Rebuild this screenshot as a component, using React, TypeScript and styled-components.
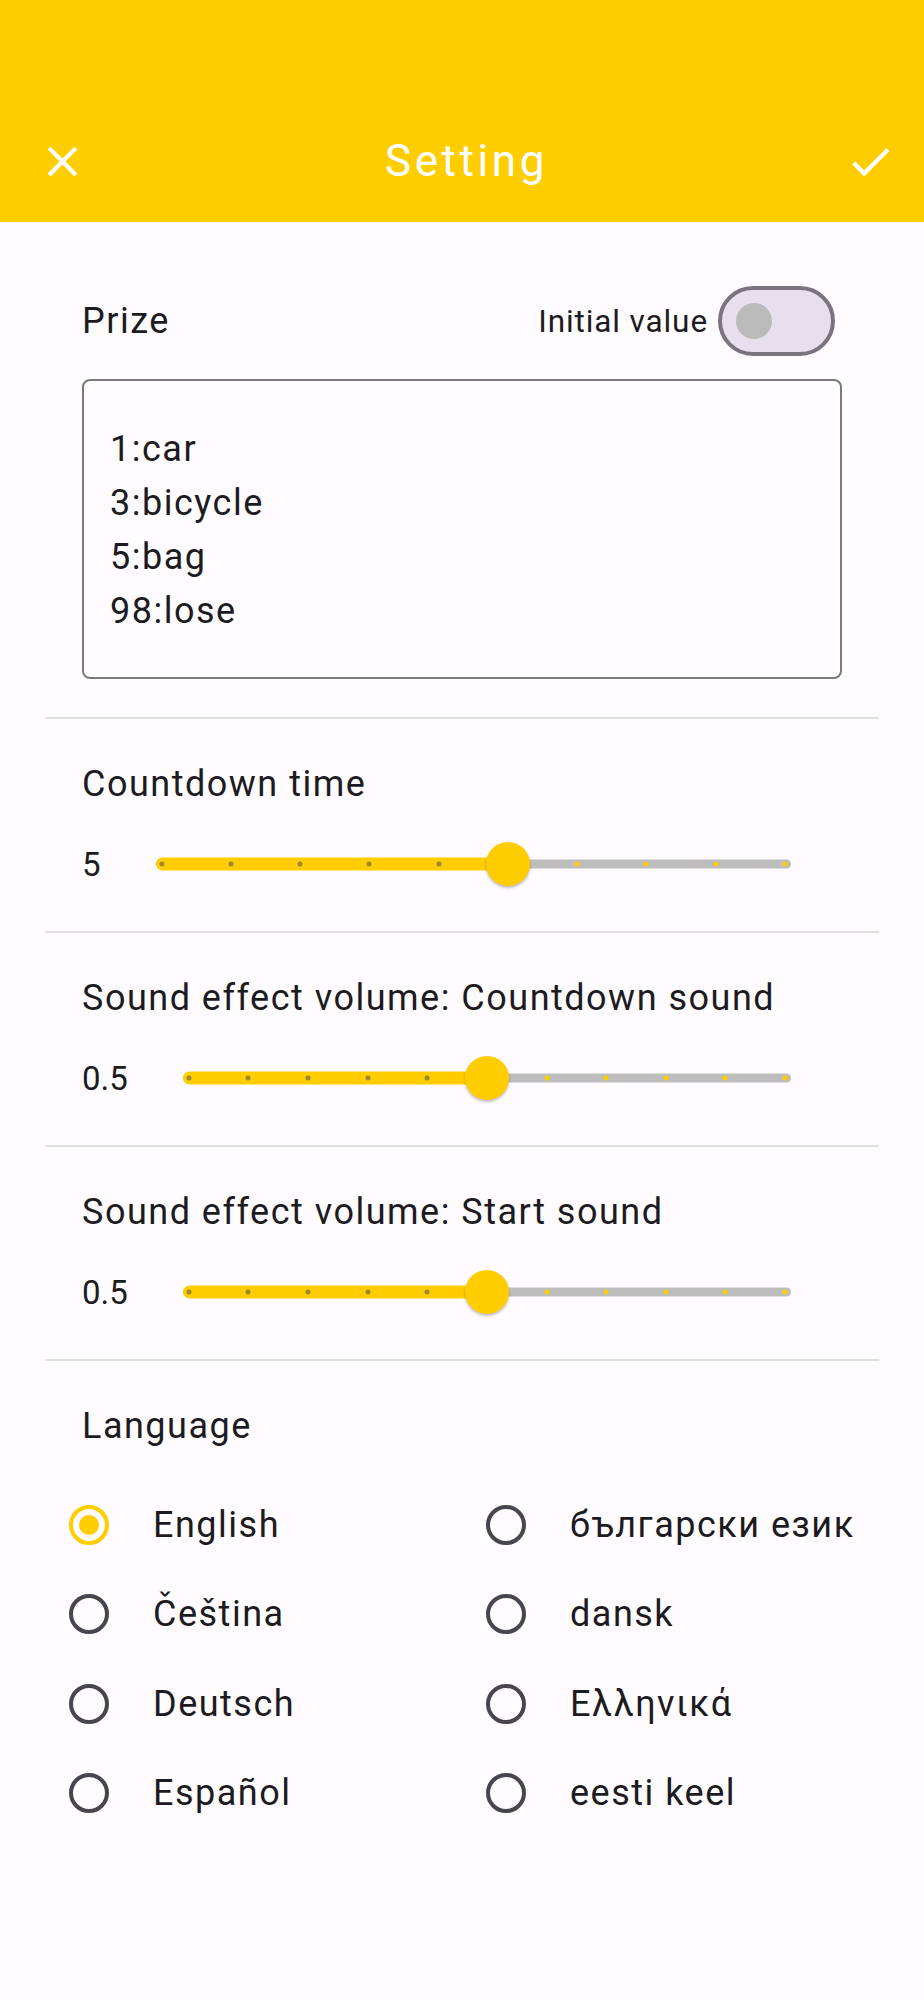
import React, { useState } from "react";
import styled, { createGlobalStyle } from "styled-components";

const YELLOW = "#FFCD00";
const TEXT = "#1C1B1F";

const GlobalStyle = createGlobalStyle`
  html, body {
    margin: 0;
    padding: 0;
    background: #fffbfe;
  }
  body {
    font-family: Roboto, "Noto Sans", "Liberation Sans", sans-serif;
    color: ${TEXT};
  }
`;

type SliderProps = {
  label: string;
  steps: number;
  index: number;
};

const Slider = ({ label, steps, index }: SliderProps): JSX.Element => {
  const frac = index / (steps - 1);
  const at = (f: number): string => `calc(6px + (100% - 12px) * ${f})`;

  return (
    <SliderRow>
      <ValueLabel>{label}</ValueLabel>
      <TrackArea>
        <InactiveTrack />
        <ActiveTrack style={{ width: at(frac) }} />
        {Array.from({ length: steps }).map((_, i) =>
          i === index ? null : (
            <Tick key={i} $active={i < index} style={{ left: at(i / (steps - 1)) }} />
          )
        )}
        <Thumb style={{ left: at(frac) }} />
      </TrackArea>
    </SliderRow>
  );
};

const CloseIcon = (): JSX.Element => (
  <svg width="51" height="51" viewBox="0 0 24 24" fill="#fff">
    <path d="M19 6.41L17.59 5 12 10.59 6.41 5 5 6.41 10.59 12 5 17.59 6.41 19 12 13.41 17.59 19 19 17.59 13.41 12z" />
  </svg>
);

const CheckIcon = (): JSX.Element => (
  <svg width="51" height="51" viewBox="0 0 24 24" fill="#fff">
    <path d="M9 16.17L4.83 12l-1.42 1.41L9 19 21 7l-1.41-1.41z" />
  </svg>
);

const languages = [
  "English",
  "български език",
  "Čeština",
  "dansk",
  "Deutsch",
  "Ελληνικά",
  "Español",
  "eesti keel",
];

const App = (): JSX.Element => {
  const [lang, setLang] = useState("English");
  const [initial, setInitial] = useState(false);

  return (
    <Page>
      <GlobalStyle />
      <Header>
        <Toolbar>
          <IconButton>
            <CloseIcon />
          </IconButton>
          <Title>Setting</Title>
          <IconButton $right>
            <CheckIcon />
          </IconButton>
        </Toolbar>
      </Header>

      <Content>
        <PrizeSection>
          <PrizeRow>
            <SectionTitle>Prize</SectionTitle>
            <SwitchGroup>
              <SwitchLabel>Initial value</SwitchLabel>
              <Switch $on={initial} onClick={() => setInitial(!initial)}>
                <SwitchThumb $on={initial} />
              </Switch>
            </SwitchGroup>
          </PrizeRow>
          <PrizeBox>{"1:car\n3:bicycle\n5:bag\n98:lose"}</PrizeBox>
        </PrizeSection>

        <Divider />

        <Section>
          <SectionTitle>Countdown time</SectionTitle>
          <Slider label="5" steps={10} index={5} />
        </Section>

        <Divider />

        <Section>
          <SectionTitle>Sound effect volume: Countdown sound</SectionTitle>
          <Slider label="0.5" steps={11} index={5} />
        </Section>

        <Divider />

        <Section>
          <SectionTitle>Sound effect volume: Start sound</SectionTitle>
          <Slider label="0.5" steps={11} index={5} />
        </Section>

        <Divider />

        <LanguageSection>
          <SectionTitle>Language</SectionTitle>
          <RadioGrid>
            {languages.map((l) => (
              <RadioOption key={l} onClick={() => setLang(l)}>
                <RadioCircle $checked={lang === l} />
                <RadioText>{l}</RadioText>
              </RadioOption>
            ))}
          </RadioGrid>
        </LanguageSection>
      </Content>
    </Page>
  );
};

const Page = styled.div`
  min-height: 2000px;
  background: #fffbfe;
`;

const Header = styled.header`
  height: 222px;
  background: ${YELLOW};
  display: flex;
  flex-direction: column;
  justify-content: flex-end;
`;

const Toolbar = styled.div`
  height: 122px;
  display: grid;
  grid-template-columns: 1fr auto 1fr;
  align-items: center;
  padding: 0 28px 0 37px;
`;

const IconButton = styled.div<{ $right?: boolean }>`
  display: flex;
  justify-content: ${(p) => (p.$right ? "flex-end" : "flex-start")};
  svg {
    display: block;
  }
`;

const Title = styled.h1`
  margin: 0;
  font-size: 44px;
  font-weight: 400;
  letter-spacing: 3.6px;
  color: #fff;
`;

const Content = styled.main`
  padding: 0 45px;
`;

const PrizeSection = styled.section`
  padding: 64px 37px 38px;
`;

const PrizeRow = styled.div`
  height: 70px;
  display: flex;
  align-items: center;
  justify-content: space-between;
`;

const SectionTitle = styled.div`
  font-size: 36px;
  line-height: 50px;
  letter-spacing: 1.5px;
  color: ${TEXT};
`;

const SwitchGroup = styled.div`
  display: flex;
  align-items: center;
  gap: 10px;
  margin-right: 7px;
`;

const SwitchLabel = styled.span`
  font-size: 31.5px;
  letter-spacing: 0.9px;
  color: ${TEXT};
`;

const Switch = styled.div<{ $on: boolean }>`
  box-sizing: border-box;
  width: 117px;
  height: 70px;
  border-radius: 35px;
  border: 4px solid ${(p) => (p.$on ? YELLOW : "#79747e")};
  background: ${(p) => (p.$on ? YELLOW : "#e7e0ec")};
  display: flex;
  align-items: center;
  justify-content: ${(p) => (p.$on ? "flex-end" : "flex-start")};
  padding: 0 14px;
  cursor: pointer;
`;

const SwitchThumb = styled.div<{ $on: boolean }>`
  width: 36px;
  height: 36px;
  border-radius: 50%;
  background: ${(p) => (p.$on ? "#fff" : "#bababa")};
`;

const PrizeBox = styled.div`
  margin-top: 23px;
  box-sizing: border-box;
  height: 300px;
  border: 2px solid #7a7a7a;
  border-radius: 8px;
  padding: 41px 26px;
  font-size: 36px;
  line-height: 54px;
  letter-spacing: 1.5px;
  white-space: pre-line;
  color: ${TEXT};
`;

const Divider = styled.hr`
  margin: 0;
  border: none;
  height: 2px;
  background: #dfdfdf;
`;

const Section = styled.section`
  padding: 40px 37px 42px;
`;

const SliderRow = styled.div`
  margin-top: 30px;
  height: 50px;
  display: flex;
  align-items: center;
`;

const ValueLabel = styled.span`
  font-size: 33px;
  letter-spacing: 0;
  color: ${TEXT};
`;

const TrackArea = styled.div`
  position: relative;
  flex: 1;
  height: 50px;
  margin: 0 51px 0 55px;
`;

const InactiveTrack = styled.div`
  position: absolute;
  left: 0;
  right: 0;
  top: 50%;
  height: 9px;
  transform: translateY(-50%);
  border-radius: 5px;
  background: #bdbdbd;
`;

const ActiveTrack = styled.div`
  position: absolute;
  left: 0;
  top: 50%;
  height: 13px;
  transform: translateY(-50%);
  border-radius: 7px;
  background: ${YELLOW};
`;

const Tick = styled.div<{ $active: boolean }>`
  position: absolute;
  top: 50%;
  width: 5px;
  height: 5px;
  border-radius: 50%;
  transform: translate(-50%, -50%);
  background: ${(p) => (p.$active ? "#9c8a2e" : YELLOW)};
`;

const Thumb = styled.div`
  position: absolute;
  top: 50%;
  width: 44px;
  height: 44px;
  border-radius: 50%;
  transform: translate(-50%, -50%);
  background: ${YELLOW};
  box-shadow: 0 2px 3px rgba(0, 0, 0, 0.25);
`;

const LanguageSection = styled.section`
  padding: 40px 0 0;
  & > ${SectionTitle} {
    padding-left: 37px;
  }
`;

const RadioGrid = styled.div`
  margin-top: 29px;
  display: grid;
  grid-template-columns: 1fr 1fr;
  grid-auto-rows: 89.5px;
`;

const RadioOption = styled.label`
  display: flex;
  align-items: center;
  padding-left: 24px;
  cursor: pointer;
`;

const RadioCircle = styled.span<{ $checked: boolean }>`
  box-sizing: border-box;
  width: 40px;
  height: 40px;
  border-radius: 50%;
  border: 4px solid ${(p) => (p.$checked ? YELLOW : "#49454f")};
  display: flex;
  align-items: center;
  justify-content: center;
  &::after {
    content: "";
    width: 20px;
    height: 20px;
    border-radius: 50%;
    background: ${YELLOW};
    display: ${(p) => (p.$checked ? "block" : "none")};
  }
`;

const RadioText = styled.span`
  margin-left: 44px;
  font-size: 36px;
  letter-spacing: 1.5px;
  color: ${TEXT};
`;

export default App;
